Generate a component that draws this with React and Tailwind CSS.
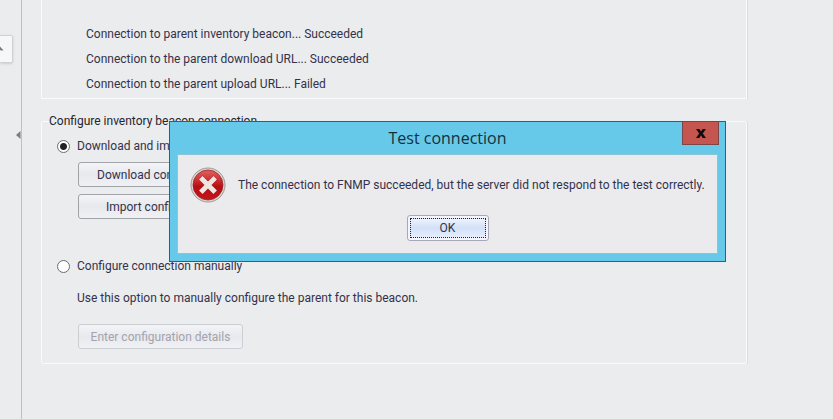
import React from "react";

const STATUS = [
  "Connection to parent inventory beacon... Succeeded",
  "Connection to the parent download URL... Succeeded",
  "Connection to the parent upload URL... Failed",
];

function ErrorIcon() {
  return (
    <svg className="h-9 w-9 shrink-0" viewBox="0 0 36 36" aria-hidden="true">
      <defs>
        <linearGradient id="errFill" x1="0" y1="0" x2="0" y2="1">
          <stop offset="0" stopColor="#e0625f" />
          <stop offset="0.4" stopColor="#c9262a" />
          <stop offset="0.55" stopColor="#b80d13" />
          <stop offset="1" stopColor="#c4161c" />
        </linearGradient>
      </defs>
      <circle cx="18" cy="18" r="17" fill="#dcd6d2" stroke="#a09893" strokeWidth="1" />
      <circle cx="18" cy="18" r="15" fill="url(#errFill)" stroke="#96282a" strokeWidth="0.8" />
      <path d="M10.6 10.6 25.4 25.4M25.4 10.6 10.6 25.4" stroke="#8f0f14" strokeWidth="6.2" opacity="0.5" />
      <path d="M10.8 10.8 25.2 25.2M25.2 10.8 10.8 25.2" stroke="#efe6e2" strokeWidth="5" />
    </svg>
  );
}

function PanelButton({ children, disabled }) {
  const state = disabled
    ? "border-[#cdced3] text-[#a3a3ad]"
    : "border-[#a2a3a8] text-[#33324a]";
  return (
    <button
      type="button"
      disabled={disabled}
      className={`block h-[25px] w-[165px] rounded-[3px] border bg-linear-to-b from-[#f3f4f6] via-[#e8e9ee] to-[#f0f1f3] text-center whitespace-nowrap ${state}`}
    >
      {children}
    </button>
  );
}

function RadioRow({ id, label, checked }) {
  return (
    <div className="flex h-4 items-center gap-[7px]">
      <input
        id={id}
        type="radio"
        name="mode"
        defaultChecked={checked}
        className="h-[13px] w-[13px] appearance-none rounded-full border border-[#6c6c70] bg-white checked:bg-[radial-gradient(circle,#222_0_3px,#fff_4px)]"
      />
      <label htmlFor={id}>{label}</label>
    </div>
  );
}

function Sidebar() {
  return (
    <aside className="flex w-[22px] shrink-0 flex-col border-r border-[#bfc0c3] pt-[35px]">
      <button
        type="button"
        aria-label="Collapse"
        className="flex h-[28px] w-[13px] items-center rounded-r-[2px] border border-l-0 border-[#d0d1d5] bg-[#f6f7f9] shadow-sm"
      >
        <svg className="h-[6px] w-[4px]" viewBox="0 0 4 6">
          <path d="M0 0.5 3.5 4.5H0.8L0 3.4Z" fill="#77787c" />
        </svg>
      </button>
      <button type="button" aria-label="Hide navigation" className="mt-[68px] self-end">
        <svg className="h-2 w-[5px]" viewBox="0 0 5 8">
          <path d="M4.5 0v8L0 4Z" fill="#7c7d80" />
        </svg>
      </button>
    </aside>
  );
}

function TestDialog() {
  return (
    <div
      role="dialog"
      aria-labelledby="dlg-title"
      className="absolute top-[121px] left-[169px] w-[557px] border border-[#3b5c68] bg-[#67c9e9] px-[7px] pb-[7px]"
    >
      <div className="relative flex h-8 items-center justify-center">
        <h1 id="dlg-title" className="font-['Open_Sans','Noto_Sans',sans-serif] text-[16px] text-[#14303c]">
          Test connection
        </h1>
        <button
          type="button"
          aria-label="Close"
          className="absolute top-0 -right-px flex h-[23px] w-[37px] items-center justify-center border border-t-0 border-[#7b4448] bg-[#c4564f]"
        >
          <svg className="h-[9px] w-[10px]" viewBox="0 0 10 9">
            <path d="M0 0H3.4L5 2.6 6.6 0H10L6.8 4.4 10 9H6.6L5 6.3 3.4 9H0L3.2 4.4Z" fill="#120c0c" />
          </svg>
        </button>
      </div>
      <div className="border border-[#8cc3d6] bg-[#ebebee] p-3">
        <div className="flex items-center gap-3">
          <ErrorIcon />
          <p>
            The connection to FNMP succeeded, but the server did not respond to the test correctly.
          </p>
        </div>
        <button
          type="button"
          className="mx-auto mt-3 block h-[26px] w-[82px] rounded-[3px] border border-[#a9a7b8] bg-[#f4f5fa] p-[2px]"
        >
          <span className="flex h-full items-center justify-center border border-dotted border-[#20203a] bg-linear-to-b from-[#eef2fc] via-[#d3e0f8] to-[#e6eefb]">
            OK
          </span>
        </button>
      </div>
    </div>
  );
}

export default function App() {
  return (
    <div className="relative flex min-h-screen bg-[#ebecee] font-['Roboto',sans-serif] text-[12px] leading-4 text-[#33324a]">
      <Sidebar />
      <main className="min-w-0 flex-1 pr-[86px] pl-[19px]">
        <section className="h-[99px] border border-t-0 border-[#fafafb] pt-[26px] pl-11 shadow-[1px_0_0_#dcdde0]">
          <ul className="space-y-[9px]">
            {STATUS.map((line) => (
              <li key={line}>{line}</li>
            ))}
          </ul>
        </section>

        <fieldset className="mt-[14px] rounded-[2px] border border-[#fafafb] pr-4 pb-[14px] pl-[7px] shadow-[1px_0_0_#dcdde0]">
          <legend className="pr-1 text-[#25252f]">Configure inventory beacon connection</legend>
          <div className="pt-[9px] pl-2">
            <RadioRow id="mode-download" label="Download and import configuration" checked />
            <div className="mt-2 ml-[21px] space-y-[7px]">
              <PanelButton>Download configuration</PanelButton>
              <PanelButton>Import configuration</PanelButton>
            </div>
            <div className="mt-[39px]">
              <RadioRow id="mode-manual" label="Configure connection manually" />
            </div>
            <div className="ml-5 pt-4">
              <p>Use this option to manually configure the parent for this beacon.</p>
            </div>
            <div className="mt-[18px] ml-[21px]">
              <PanelButton disabled>Enter configuration details</PanelButton>
            </div>
          </div>
        </fieldset>
      </main>
      <TestDialog />
    </div>
  );
}
